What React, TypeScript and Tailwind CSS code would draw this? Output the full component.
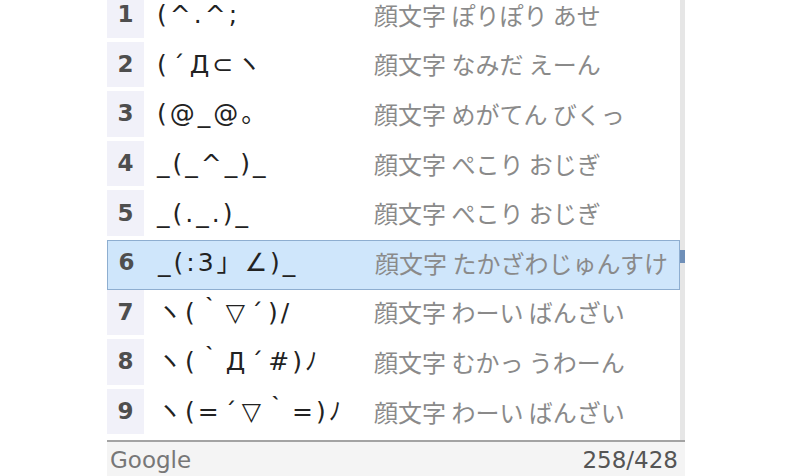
const rows = [
  { n: 1, face: '(^.^;', desc: '顔文字 ぽりぽり あせ' },
  { n: 2, face: '(´Д⊂ヽ', desc: '顔文字 なみだ えーん' },
  { n: 3, face: '(@_@。', desc: '顔文字 めがてん びくっ' },
  { n: 4, face: '_(_^_)_', desc: '顔文字 ぺこり おじぎ' },
  { n: 5, face: '_(._.)_', desc: '顔文字 ぺこり おじぎ' },
  { n: 6, face: '_(:3」∠)_', desc: '顔文字 たかざわじゅんすけ' },
  { n: 7, face: 'ヽ(｀▽´)/', desc: '顔文字 わーい ばんざい' },
  { n: 8, face: 'ヽ(｀Д´#)ﾉ', desc: '顔文字 むかっ うわーん' },
  { n: 9, face: 'ヽ(=´▽｀=)ﾉ', desc: '顔文字 わーい ばんざい' },
];

const jp = { fontFamily: '"Noto Sans CJK JP", "Noto Sans", sans-serif' };
const verdanaish = { fontFamily: '"DejaVu Sans", "Noto Sans CJK JP", sans-serif' };

// the IME font draws the acute accent full width
function Face({ text }: { text: string }) {
  return (
    <>
      {text.split('').map((c, i) =>
        c === '´' ? (
          <span key={i} className="inline-block w-[20px] text-center">
            {c}
          </span>
        ) : (
          <span key={i}>{c}</span>
        )
      )}
    </>
  );
}

function Row({ n, face, desc, selected }: { n: number; face: string; desc: string; selected?: boolean }) {
  return (
    <div
      className={`flex items-center h-[49.6px] pb-[4px] ${
        selected ? 'bg-[#cfe6fb] border border-[#8eaed0]' : ''
      }`}
    >
      <div
        className={`w-[37px] h-full flex items-center justify-center text-[23px] leading-none font-bold text-[#4e4e4e] ${
          selected ? '' : 'bg-[#f1f1f9]'
        }`}
        style={{ fontFamily: '"DejaVu Sans", sans-serif' }}
      >
        {n}
      </div>
      <div
        className="w-[230px] pl-[13px] text-[25px] leading-none tracking-[3px] text-[#222] whitespace-nowrap"
        style={verdanaish}
      >
        <Face text={face} />
      </div>
      <div className="text-[24px] leading-none text-[#8a8a8a] whitespace-nowrap" style={jp}>
        {desc}
      </div>
    </div>
  );
}

export default function App() {
  return (
    <div className="w-[790px] h-[476px] bg-white overflow-hidden">
      <div className="ml-[107px] w-[578px] h-full flex flex-col">
        <div className="flex h-[440px] overflow-hidden">
          <div className="w-[573px] -mt-[8px]">
            {rows.map((r) => (
              <Row key={r.n} {...r} selected={r.n === 6} />
            ))}
          </div>
          <div className="w-[5px] bg-[#e6e6e6]">
            <div className="mt-[250px] h-[13px] bg-[#6f8fb8]" />
          </div>
        </div>
        <div
          className="flex-1 border-t-2 border-[#a3a3a3] bg-[#f4f4f4] flex items-start justify-between pl-[3px] pr-[7px] pt-[7px] text-[23px] leading-none"
          style={{ fontFamily: '"DejaVu Sans", sans-serif' }}
        >
          <span className="text-[#777]">Google</span>
          <span className="text-[#555]">258/428</span>
        </div>
      </div>
    </div>
  );
}
